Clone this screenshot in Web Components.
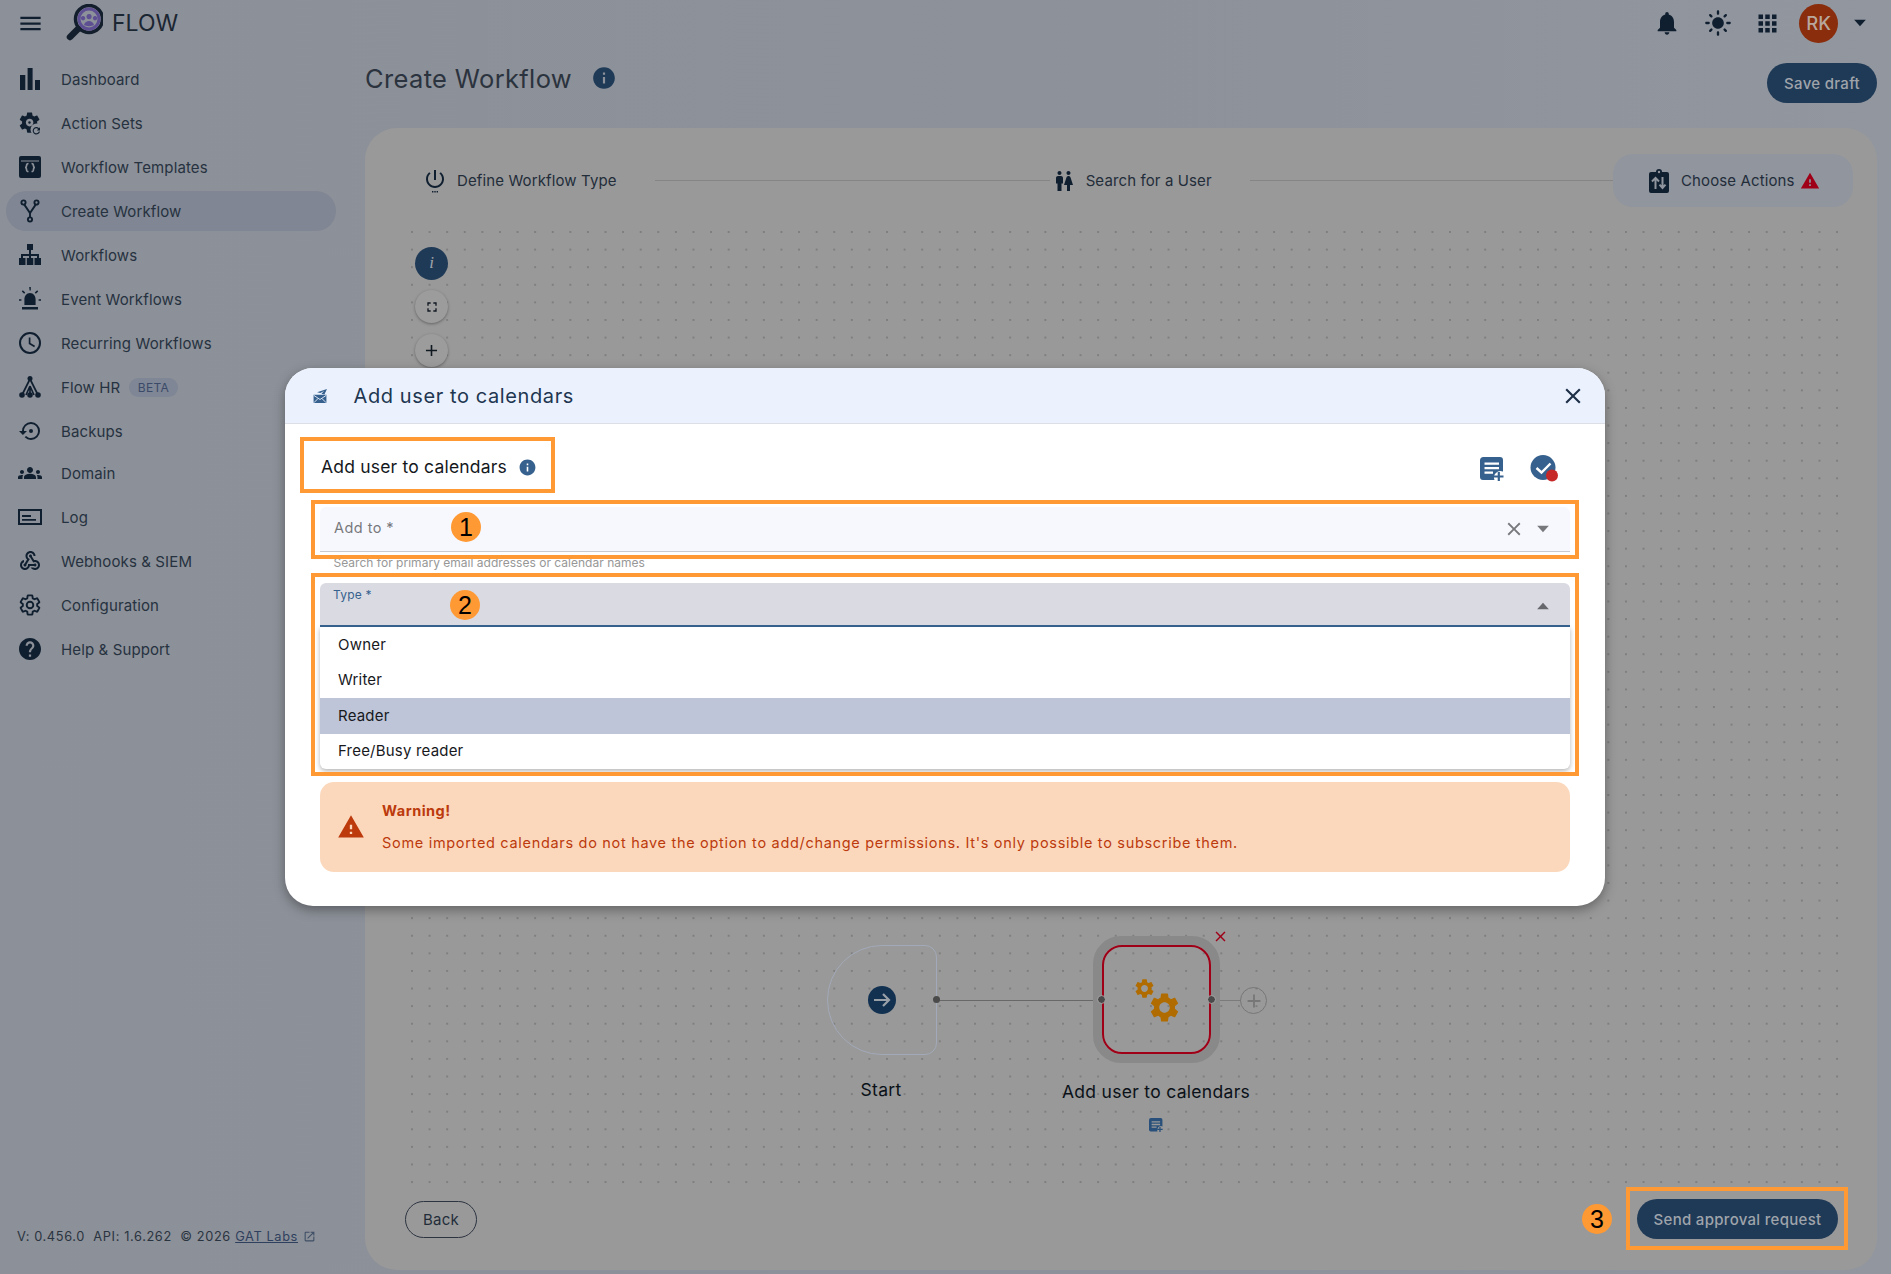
<!DOCTYPE html>
<html lang="en">
<head>
<meta charset="utf-8">
<title>Flow - Create Workflow</title>
<style>
  html, body { margin: 0; padding: 0; }
  body { width: 1891px; height: 1274px; overflow: hidden; background: #8d9199; font-family: Inter, "Noto Sans", sans-serif; }
</style>
</head>
<body>
<fw-app>
  <fw-topbar slot="top"></fw-topbar>

  <fw-sidenav slot="side">
    <fw-nav-item icon="bars">Dashboard</fw-nav-item>
    <fw-nav-item icon="gearsync">Action Sets</fw-nav-item>
    <fw-nav-item icon="template">Workflow Templates</fw-nav-item>
    <fw-nav-item icon="fork" active>Create Workflow</fw-nav-item>
    <fw-nav-item icon="sitemap">Workflows</fw-nav-item>
    <fw-nav-item icon="siren">Event Workflows</fw-nav-item>
    <fw-nav-item icon="clock">Recurring Workflows</fw-nav-item>
    <fw-nav-item icon="tree" chip="BETA">Flow HR</fw-nav-item>
    <fw-nav-item icon="restore">Backups</fw-nav-item>
    <fw-nav-item icon="groups" style="margin-top:-2px">Domain</fw-nav-item>
    <fw-nav-item icon="log">Log</fw-nav-item>
    <fw-nav-item icon="webhook">Webhooks &amp; SIEM</fw-nav-item>
    <fw-nav-item icon="cog">Configuration</fw-nav-item>
    <fw-nav-item icon="help">Help &amp; Support</fw-nav-item>
  </fw-sidenav>

  <fw-page slot="main" heading="Create Workflow">
    <fw-panel>
      <fw-stepper slot="steps"></fw-stepper>
      <fw-canvas slot="canvas"></fw-canvas>
      <fw-button slot="back" outline>Back</fw-button>
      <fw-button slot="next" style="width:201px">Send approval request</fw-button>
    </fw-panel>
  </fw-page>

  <fw-dialog slot="overlay" heading="Add user to calendars">
    <fw-field label="Add to *" hint="Search for primary email addresses or calendar names" clearable></fw-field>
    <fw-field label="Type *" open></fw-field>
    <fw-menu>
      <fw-option>Owner</fw-option>
      <fw-option>Writer</fw-option>
      <fw-option selected>Reader</fw-option>
      <fw-option>Free/Busy reader</fw-option>
    </fw-menu>
    <fw-alert title="Warning!">Some imported calendars do not have the option to add/change permissions. It's only possible to subscribe them.</fw-alert>
  </fw-dialog>

  <!-- annotations drawn over the screenshot -->
  <fw-mark slot="overlay" style="left:300px;top:437px;width:255px;height:56px"></fw-mark>
  <fw-mark slot="overlay" style="left:311px;top:500px;width:1268px;height:59px"></fw-mark>
  <fw-mark slot="overlay" style="left:311px;top:573px;width:1268px;height:203px"></fw-mark>
  <fw-mark slot="overlay" style="left:1626px;top:1187px;width:222px;height:63px"></fw-mark>
  <fw-num slot="overlay" style="left:451px;top:512px">1</fw-num>
  <fw-num slot="overlay" style="left:450px;top:590px">2</fw-num>
  <fw-num slot="overlay" style="left:1582px;top:1204px">3</fw-num>
</fw-app>

<script>
const GEAR = 'M19.14 12.94c.04-.3.06-.61.06-.94 0-.32-.02-.64-.07-.94l2.03-1.58c.18-.14.23-.41.12-.61l-1.92-3.32c-.12-.22-.37-.29-.59-.22l-2.39.96c-.5-.38-1.03-.7-1.62-.94l-.36-2.54c-.04-.24-.24-.41-.48-.41h-3.84c-.24 0-.43.17-.47.41l-.36 2.54c-.59.24-1.13.57-1.62.94l-2.39-.96c-.22-.08-.47 0-.59.22L2.74 8.87c-.12.21-.08.47.12.61l2.03 1.58c-.05.3-.09.63-.09.94s.02.64.07.94l-2.03 1.58c-.18.14-.23.41-.12.61l1.92 3.32c.12.22.37.29.59.22l2.39-.96c.5.38 1.03.7 1.62.94l.36 2.54c.05.24.24.41.48.41h3.84c.24 0 .44-.17.47-.41l.36-2.54c.59-.24 1.13-.56 1.62-.94l2.39.96c.22.08.47 0 .59-.22l1.92-3.32c.12-.22.07-.47-.12-.61l-2.01-1.58z';
const HOLE = 'M12 15.6c-1.98 0-3.6-1.62-3.6-3.6s1.62-3.6 3.6-3.6 3.6 1.62 3.6 3.6-1.62 3.6-3.6 3.6z';

const ICONS = {
  menu: '<path d="M3 18h18v-2H3v2zm0-5h18v-2H3v2zm0-7v2h18V6H3z"/>',
  bars: '<path d="M2 8h5.3v15H2zM9.6 1h5v22h-5zM17 13h5v10h-5z"/>',
  gearsync: `<path fill-rule="evenodd" d="${GEAR}${HOLE}" transform="translate(-1 -1) scale(1.05)"/><circle cx="11.500" cy="11.500" r="1.200"/><circle cx="18.5" cy="18.5" r="6" fill="var(--cut,#8d9199)"/><path d="M22 16.2v3.2h-3.2l1.3-1.3a2.5 2.5 0 1 0 .6 2.4h1.3a3.7 3.7 0 1 1-1-3.3z"/>`,
  template: '<path fill-rule="evenodd" d="M3 1h18a2 2 0 0 1 2 2v18a2 2 0 0 1-2 2H3a2 2 0 0 1-2-2V3a2 2 0 0 1 2-2zm0 4.5V21h18V5.500z"/><rect x="2.5" y="6.5" width="19" height="15"/><path d="M10.500 8.500c-2 0-2 1-2 2.500 0 1-.5 1.500-1.500 1.500 1 0 1.500.5 1.500 1.500 0 1.800 0 2.500 2 2.500M13.500 8.500c2 0 2 1 2 2.500 0 1 .5 1.500 1.500 1.500-1 0-1.500.5-1.500 1.500 0 1.800 0 2.500-2 2.500" fill="none" stroke="#8d9199" stroke-width="1.700"/>',
  fork: '<g fill="none" stroke="currentColor" stroke-width="1.9"><circle cx="5.5" cy="3.5" r="2.1"/><circle cx="18.5" cy="3.5" r="2.1"/><circle cx="12" cy="20.5" r="2.1"/><path d="M6.3 5.6l5.7 8.4 5.7-8.4M12 14v4.4"/></g>',
  sitemap: '<path d="M9 1h6v6H9zM11 7h2v4h8v4h-2v-2h-6v2h-2v-2H5v2H3v-4h8zM1 15h6.5v7H1zM8.8 15h6.5v7H8.8zM16.5 15H23v7h-6.5z"/>',
  siren: '<path d="M12 6c3.6 0 5.6 3 5.6 6.5V18H6.4v-5.5C6.4 9 8.4 6 12 6zM4 20h16v2.4H4zM11.2 0h1.6v3.6h-1.2zM1 12.2h2.4v1.6H1zM20.6 12.2H23v1.6h-2.4zM3.8 4.4l1-1.2 2.4 2.4-1 1.1zM20.2 4.4l-1-1.2-2.4 2.4 1 1.1z"/>',
  clock: '<circle cx="12" cy="12" r="10" fill="none" stroke="currentColor" stroke-width="2"/><path d="M11.6 6.5v6l5 3" fill="none" stroke="currentColor" stroke-width="1.7"/>',
  tree: '<circle cx="12" cy="3.5" r="2.5"/><circle cx="4" cy="20" r="2.8"/><circle cx="12" cy="20" r="2.8"/><circle cx="20" cy="20" r="2.8"/><path d="M12 4L4 20M12 4l8 16M12 11v9M12 11l-4 9M12 11l4 9" fill="none" stroke="currentColor" stroke-width="1.7"/>',
  restore: '<path d="M13 3a9 9 0 0 0-9 9H1l3.89 3.89.07.14L9 12H6c0-3.87 3.13-7 7-7s7 3.13 7 7-3.13 7-7 7c-1.93 0-3.68-.79-4.94-2.06l-1.42 1.42A8.954 8.954 0 0 0 13 21a9 9 0 0 0 0-18z"/><circle cx="13" cy="12" r="2"/>',
  groups: '<path d="M12 12.75c1.63 0 3.07.39 4.24.9 1.08.48 1.76 1.56 1.76 2.73V18H6v-1.61c0-1.18.68-2.26 1.76-2.73 1.17-.52 2.61-.91 4.24-.91zM4 13c1.1 0 2-.9 2-2s-.9-2-2-2-2 .9-2 2 .9 2 2 2zm1.13 1.1c-.37-.06-.74-.1-1.13-.1-.99 0-1.93.21-2.78.58C.48 14.9 0 15.62 0 16.43V18h4.5v-1.61c0-.83.23-1.61.63-2.29zM20 13c1.1 0 2-.9 2-2s-.9-2-2-2-2 .9-2 2 .9 2 2 2zm4 3.43c0-.81-.48-1.53-1.22-1.85-.85-.37-1.79-.58-2.78-.58-.39 0-.76.04-1.13.1.4.68.63 1.46.63 2.29V18H24v-1.57zM12 6c1.66 0 3 1.34 3 3s-1.34 3-3 3-3-1.34-3-3 1.34-3 3-3z"/>',
  log: '<path fill-rule="evenodd" d="M0 4h24v16H0zm2 2v12h20V6z"/><path d="M4 10h9v2H4zM4 14h14v1.8H4z"/>',
  webhook: '<path d="M10 15h5.88c.27-.31.67-.5 1.12-.5.83 0 1.5.67 1.5 1.5s-.67 1.5-1.5 1.5c-.44 0-.84-.19-1.12-.5H11.9c-.46 2.28-2.48 4-4.9 4-2.76 0-5-2.24-5-5 0-2.42 1.72-4.44 4-4.9v2.07c-1.16.41-2 1.53-2 2.83 0 1.65 1.35 3 3 3s3-1.35 3-3v-1zm2.5-11c1.65 0 3 1.35 3 3h2c0-2.76-2.24-5-5-5s-5 2.24-5 5c0 1.43.6 2.71 1.55 3.62l-2.35 3.9c-.68.14-1.2.75-1.2 1.48 0 .83.67 1.5 1.5 1.5s1.5-.67 1.5-1.5c0-.16-.02-.31-.07-.45l3.38-5.63C10.49 9.61 9.5 8.42 9.5 7c0-1.65 1.35-3 3-3zm4.5 9c-.64 0-1.23.2-1.72.54l-3.05-5.07C11.53 8.35 11 7.74 11 7c0-.83.67-1.5 1.5-1.5S14 6.17 14 7c0 .15-.02.29-.06.43l2.19 3.65c.28-.05.57-.08.87-.08 2.76 0 5 2.24 5 5s-2.24 5-5 5c-1.85 0-3.47-1.01-4.33-2.5h2.67c.48.32 1.05.5 1.66.5 1.65 0 3-1.35 3-3s-1.35-3-3-3z"/>',
  cog: `<path d="${GEAR}" fill="none" stroke="currentColor" stroke-width="1.9"/><circle cx="12" cy="12" r="3.3" fill="none" stroke="currentColor" stroke-width="1.9"/>`,
  gear: `<path fill-rule="evenodd" d="${GEAR}${HOLE}"/>`,
  help: '<path d="M12 2C6.48 2 2 6.48 2 12s4.48 10 10 10 10-4.48 10-10S17.52 2 12 2zm1 17h-2v-2h2v2zm2.07-7.75l-.9.92C13.45 12.9 13 13.5 13 15h-2v-.5c0-1.1.45-2.1 1.17-2.83l1.24-1.26c.37-.36.59-.86.59-1.41 0-1.1-.9-2-2-2s-2 .9-2 2H8c0-2.21 1.79-4 4-4s4 1.79 4 4c0 .88-.36 1.68-.93 2.25z" transform="translate(-1.200 -1.200) scale(1.100)"/>',
  bell: '<path d="M12 22c1.1 0 2-.9 2-2h-4c0 1.1.89 2 2 2zm6-6v-5c0-3.07-1.64-5.64-4.5-6.32V4c0-.83-.67-1.5-1.5-1.5s-1.5.67-1.5 1.5v.68C7.63 5.36 6 7.92 6 11v5l-2 2v1h16v-1l-2-2z"/>',
  sun: '<path d="M12 7c-2.76 0-5 2.24-5 5s2.24 5 5 5 5-2.24 5-5-2.24-5-5-5zM2 13h2c.55 0 1-.45 1-1s-.45-1-1-1H2c-.55 0-1 .45-1 1s.45 1 1 1zm18 0h2c.55 0 1-.45 1-1s-.45-1-1-1h-2c-.55 0-1 .45-1 1s.45 1 1 1zM11 2v2c0 .55.45 1 1 1s1-.45 1-1V2c0-.55-.45-1-1-1s-1 .45-1 1zm0 18v2c0 .55.45 1 1 1s1-.45 1-1v-2c0-.55-.45-1-1-1s-1 .45-1 1zM5.99 4.58a.996.996 0 0 0-1.41 0 .996.996 0 0 0 0 1.41l1.06 1.06c.39.39 1.03.39 1.41 0s.39-1.03 0-1.41L5.99 4.58zm12.37 12.37a.996.996 0 0 0-1.41 0 .996.996 0 0 0 0 1.41l1.06 1.06c.39.39 1.03.39 1.41 0a.996.996 0 0 0 0-1.41l-1.06-1.06zm1.06-10.96a.996.996 0 0 0 0-1.41.996.996 0 0 0-1.41 0l-1.06 1.06c-.39.39-.39 1.03 0 1.41s1.03.39 1.41 0l1.06-1.06zM7.05 18.36a.996.996 0 0 0 0-1.41.996.996 0 0 0-1.41 0l-1.06 1.06c-.39.39-.39 1.03 0 1.41s1.03.39 1.41 0l1.06-1.06z"/>',
  apps: '<path d="M4 8h4V4H4v4zm6 12h4v-4h-4v4zm-6 0h4v-4H4v4zm0-6h4v-4H4v4zm6 0h4v-4h-4v4zm6-10v4h4V4h-4zm-6 4h4V4h-4v4zm6 6h4v-4h-4v4zm0 6h4v-4h-4v4z"/>',
  info: '<path d="M12 2C6.48 2 2 6.48 2 12s4.48 10 10 10 10-4.48 10-10S17.52 2 12 2zm1 15h-2v-6h2v6zm0-8h-2V7h2v2z"/>',
  close: '<path d="M19 6.41 17.59 5 12 10.59 6.41 5 5 6.41 10.59 12 5 17.59 6.41 19 12 13.41 17.59 19 19 17.59 13.41 12z"/>',
  warning: '<path d="M1 21h22L12 2 1 21zm12-3h-2v-2h2v2zm0-4h-2v-4h2v4z"/>',
  power: '<path d="M13 1h-2v10h2V1zm4.83 2.17l-1.42 1.42C17.99 5.86 19 7.81 19 10c0 3.87-3.13 7-7 7s-7-3.13-7-7c0-2.19 1.01-4.14 2.58-5.42L6.17 3.17C4.23 4.82 3 7.26 3 10c0 4.97 4.03 9 9 9s9-4.03 9-9c0-2.74-1.23-5.18-3.17-6.83z"/><path d="M9 22h1.4v1.4H9zM11.3 22h1.4v1.4h-1.4zM13.6 22H15v1.4h-1.4z"/>',
  people: '<path d="M5.5 22v-7.5H4V9c0-1.1.9-2 2-2h3c1.1 0 2 .9 2 2v5.5H9.5V22h-4zM18 22v-6h3l-2.54-7.63C18.18 7.55 17.42 7 16.56 7h-.12c-.86 0-1.63.55-1.9 1.37L12 16h3v6h3zM7.5 6c1.11 0 2-.89 2-2s-.89-2-2-2-2 .89-2 2 .89 2 2 2zm9 0c1.11 0 2-.89 2-2s-.89-2-2-2-2 .89-2 2 .89 2 2 2z"/>',
  clipboard: '<path d="M4 3h5a3 3 0 0 1 6 0h5a2 2 0 0 1 2 2v17a2 2 0 0 1-2 2H4a2 2 0 0 1-2-2V5a2 2 0 0 1 2-2z"/><circle cx="12" cy="3" r="1.2" fill="#90959e"/><path d="M8.5 20V9.5M5 12.5l3.5-3.6 3.5 3.6M15.5 8v11M12.5 15.6l3 3.4 3-3.4" fill="none" stroke="#90959e" stroke-width="2"/>',
  postadd: '<path d="M3.5 0h16.500A3 3 0 0 1 23 3v11.500a6.500 6.500 0 0 0-8.500 8.500H3a3 3 0 0 1-3-3V3.500A3.500 3.500 0 0 1 3.500 0z"/><path d="M4.500 5.500h14.500v2.300H4.500zM4.500 10h14.500v2.300H4.500zM4.500 14.500h8.500v2.300H4.500z" fill="var(--cut,#fff)"/><path d="M18.800 15v9M14 19.500h9.500" fill="none" stroke="currentColor" stroke-width="2.200"/>',
  fullscreen: '<path d="M7 14H5v5h5v-2H7v-3zm-2-4h2V7h3V5H5v5zm12 7h-3v2h5v-5h-2v3zM14 5v2h3v3h2V5h-5z"/>',
  plus: '<path d="M19 13h-6v6h-2v-6H5v-2h6V5h2v6h6v2z"/>',
  external: '<path d="M19 19H5V5h7V3H5a2 2 0 0 0-2 2v14a2 2 0 0 0 2 2h14c1.1 0 2-.9 2-2v-7h-2v7zM14 3v2h3.590l-9.830 9.830 1.410 1.410L19 6.410V10h2V3h-7z"/>',
  mailsend: '<path d="M1 10h22v14H1z"/><path d="M1.500 11l10.500 7 10.500-7M1.500 23.500l7.500-7.500M22.500 23.500l-7.500-7.500" fill="none" stroke="#ebf2fe" stroke-width="1.500"/><path d="M24 0L7 5.500l5.500 1.500L19 3.500 14.500 8l5 1.500z"/>',
  caretdown: '<path d="M5 8h14l-7 8z"/>',
  caretup: '<path d="M5 16h14l-7-8z"/>'
};

class FwBase extends HTMLElement {
  constructor() {
    super();
    this.attachShadow({ mode: 'open' }).innerHTML = this.markup();
  }
  attr(name, fallback = '') {
    return this.hasAttribute(name) ? this.getAttribute(name) : fallback;
  }
  markup() { return '<slot></slot>'; }
}

class FwIcon extends FwBase {
  markup() {
    const size = this.attr('size', '24');
    return `<style>
        :host { display: inline-flex; flex: none; width: ${size}px; height: ${size}px; color: inherit; }
        svg { width: 100%; height: 100%; fill: currentColor; display: block; overflow: visible; }
      </style>
      <svg viewBox="0 0 24 24" aria-hidden="true">${ICONS[this.attr('name')] || ''}</svg>`;
  }
}

class FwApp extends FwBase {
  markup() {
    return `<style>
        :host { display: grid; position: relative; width: 1891px; height: 1274px; overflow: hidden;
          grid-template-columns: 365px 1fr; grid-template-rows: 46px 1fr;
          background: linear-gradient(90deg, #8c9098 0%, #8d9199 60%, #92979f 100%);
          color: #232d3a; font-family: Inter, "Noto Sans", sans-serif; }
        .top { grid-column: 1 / 3; }
        .side, .main { min-height: 0; min-width: 0; }
      </style>
      <div class="top"><slot name="top"></slot></div>
      <div class="side"><slot name="side"></slot></div>
      <div class="main"><slot name="main"></slot></div>
      <slot name="overlay"></slot>`;
  }
}

class FwTopbar extends FwBase {
  markup() {
    return `<style>
        :host { display: flex; align-items: center; height: 46px; color: #101f30; }
        .burger { margin-left: 17px; color: #101f30; }
        .logo { position: relative; width: 37px; height: 38px; margin-left: 22px; }
        .logo svg { width: 37px; height: 38px; display: block; }
        .name { font-size: 23px; margin-left: 9px; color: #1b2633; }
        .spacer { flex: 1; }
        fw-icon { color: #101f30; }
        .avatar { width: 39px; height: 39px; border-radius: 50%; background: #8a2d0c; color: #b8a79d;
          display: flex; align-items: center; justify-content: center; font-size: 18.500px; font-weight: 500; }
      </style>
      <fw-icon class="burger" name="menu" size="27"></fw-icon>
      <div class="logo">
        <svg viewBox="0 0 37 38"><circle cx="23" cy="15" r="13.500" fill="#8d9199" stroke="#141f2d" stroke-width="3.500"/>
          <circle cx="23" cy="15" r="10" fill="none" stroke="#5d4f92" stroke-width="3"/>
          <path d="M17 12a2.200 2.200 0 1 0 .1 0zM23 10a2.600 2.600 0 1 0 .1 0zM29 12a2.200 2.200 0 1 0 .1 0zM18 21c.8-3 3-4 5-4s4.200 1 5 4c-2.500 1.500-7.500 1.500-10 0z" fill="#5d4f92"/>
          <path d="M12 25L4 33" stroke="#141f2d" stroke-width="6.500" stroke-linecap="round"/></svg>
      </div>
      <div class="name">FLOW</div>
      <div class="spacer"></div>
      <fw-icon name="bell" size="28" style="margin-right:2px"></fw-icon>
      <fw-icon name="sun" size="28" style="margin-left:21px;margin-right:2px"></fw-icon>
      <fw-icon name="apps" size="27" style="margin-left:20px"></fw-icon>
      <div class="avatar" style="margin-left:18px">RK</div>
      <fw-icon name="caretdown" size="20" style="margin:0 21px 0 12px"></fw-icon>`;
  }
}

class FwSidenav extends FwBase {
  markup() {
    return `<style>
        :host { display: flex; flex-direction: column; height: 100%; box-sizing: border-box; padding-top: 13px; }
        nav { display: flex; flex-direction: column; gap: 4px; }
        footer { margin-top: auto; padding: 0 0 30px 17px; font-size: 12.800px; letter-spacing: .62px;
          color: #2a3440; white-space: pre; display: flex; align-items: center; }
        a { color: #2f405e; text-decoration: underline; margin-left: 0; }
        fw-icon { color: #3e4e66; margin-left: 5px; }
      </style>
      <nav><slot></slot></nav>
      <footer>V: 0.456.0  API: 1.6.262  © 2026 <a>GAT Labs</a><fw-icon name="external" size="13"></fw-icon></footer>`;
  }
}

class FwNavItem extends FwBase {
  markup() {
    const chip = this.attr('chip');
    return `<style>
        :host { display: flex; align-items: center; height: 40px; width: 330px; margin-left: 6px; box-sizing: border-box;
          padding-left: 12px; border-radius: 20px; font-size: 15px; letter-spacing: .12px; color: #263240; }
        :host([active]) { background: #808693; }
        fw-icon { color: #101f30; margin-right: 19px; --cut: #8d9199; }
        .chip { margin-left: 9px; height: 19px; padding: 0 8.500px; border-radius: 10px; background: #7f8695; color: #3a4a68;
          font-size: 12px; line-height: 19px; letter-spacing: .3px; }
      </style>
      <fw-icon name="${this.attr('icon')}" size="24"></fw-icon>
      <slot></slot>${chip ? `<span class="chip">${chip}</span>` : ''}`;
  }
}

class FwPage extends FwBase {
  markup() {
    return `<style>
        :host { display: flex; flex-direction: column; height: 100%; box-sizing: border-box; padding: 0 14px 4px 0; }
        header { display: flex; align-items: center; height: 82px; flex: none; }
        h1 { margin: 0 0 18px; font-size: 25.500px; font-weight: 400; letter-spacing: .35px; color: #2b333e; }
        fw-icon { color: #1f3a57; margin: 0 0 18px 19px; }
        .space { flex: 1; }
        header > fw-button { margin-top: -8px; }
      </style>
      <header>
        <h1>${this.attr('heading')}</h1>
        <fw-icon name="info" size="26"></fw-icon>
        <div class="space"></div>
        <fw-button>Save draft</fw-button>
      </header>
      <slot></slot>`;
  }
}

class FwButton extends FwBase {
  markup() {
    return `<style>
        :host { display: inline-flex; align-items: center; justify-content: center; box-sizing: border-box; height: 40px;
          padding: 0 17px; border-radius: 20px; background: #1f3a57; color: #9fa4ab; font-size: 15px; font-weight: 500;
          letter-spacing: .3px; white-space: nowrap; }
        :host([outline]) { background: transparent; border: 1.500px solid #2c3440; color: #232d3a; width: 72px; height: 37px; font-weight: 400; }
      </style><slot></slot>`;
  }
}

class FwPanel extends FwBase {
  markup() {
    return `<style>
        :host { display: flex; flex-direction: column; flex: 1; min-height: 0; background: #999; border-radius: 32px; }
        .canvas { flex: 1; min-height: 0; }
        .actions { display: flex; justify-content: space-between; align-items: center; flex: none;
          height: 85px; padding: 0 39px 17px 40px; box-sizing: border-box; }
      </style>
      <slot name="steps"></slot>
      <div class="canvas"><slot name="canvas"></slot></div>
      <div class="actions"><slot name="back"></slot><slot name="next"></slot></div>`;
  }
}

class FwStepper extends FwBase {
  markup() {
    return `<style>
        :host { display: flex; align-items: center; flex: none; height: 53px; margin: 26px 0 18px; padding: 0 24px 0 58px; color: #232d3a; }
        .step { display: flex; align-items: center; gap: 10px; font-size: 15px; letter-spacing: .12px; white-space: nowrap; }
        fw-icon { color: #101f30; }
        .line { height: 1px; background: #858585; flex: none; }
        .current { background: #90959e; height: 53px; width: 240px; box-sizing: border-box; padding-left: 34px; border-radius: 20px; flex: none; }
        .warn { color: #9f0017; margin-left: -5px; }
      </style>
      <div class="step"><fw-icon name="power" size="24"></fw-icon>Define Workflow Type</div>
      <div class="line" style="width:395px;margin:0 2px 0 38px"></div>
      <div class="step"><fw-icon name="people" size="24"></fw-icon>Search for a User</div>
      <div class="line" style="flex:1;margin-left:38px"></div>
      <div class="step current"><fw-icon name="clipboard" size="24"></fw-icon>Choose Actions<fw-icon class="warn" name="warning" size="20"></fw-icon></div>`;
  }
}

class FwCanvas extends FwBase {
  markup() {
    return `<style>
        :host { display: block; position: relative; height: 100%; margin: 0 26px 0 35px;
          background-image: radial-gradient(circle at center, #777 .6px, transparent 1px);
          background-size: 17.600px 17.600px; background-position: 3.200px -1.800px; }
        .tools { position: absolute; left: 15px; top: 21.500px; display: flex; flex-direction: column; gap: 10.500px; }
        .tool { width: 33px; height: 33px; border-radius: 50%; background: #9c9c9c; color: #101820; display: flex;
          align-items: center; justify-content: center; box-shadow: 0 1px 3px rgba(0,0,0,.35); }
        .tool.info { background: #1f3a57; color: #9fa4ab; font: italic 17px "Liberation Serif", serif; box-shadow: none; }
        .wire { position: absolute; height: 1.500px; background: #686868; }
        .handle { position: absolute; width: 7px; height: 7px; border-radius: 50%; background: #4a4a4a; }
        .add { position: absolute; width: 25px; height: 25px; border-radius: 50%; border: 1.500px solid #777; color: #777;
          display: flex; align-items: center; justify-content: center; }
        .start { position: absolute; box-sizing: border-box; width: 110px; height: 110px; border: 1px solid #a2a9b8; border-radius: 55px 12px 12px 55px;
          display: flex; align-items: center; justify-content: center; }
        .arrow { width: 28px; height: 28px; border-radius: 50%; background: #123151; }
        .arrow svg { display: block; }
        .halo { position: absolute; width: 127px; height: 127px; box-sizing: border-box; border-radius: 28px; border: 9px solid #898989; }
        .node { width: 100%; height: 100%; box-sizing: border-box; border: 2px solid #9f0017; border-radius: 20px; margin: 0; position: relative; }
        .gear { position: absolute; color: #b06c00; }
        .x { position: absolute; color: #9f0017; }
        .label { position: absolute; color: #0b1118; font-size: 17.500px; letter-spacing: .3px; transform: translateX(-50%); white-space: nowrap; }
        .doc { position: absolute; color: #29507a; --cut: #999; }
      </style>
      <div class="tools">
        <div class="tool info">i</div>
        <div class="tool"><fw-icon name="fullscreen" size="16"></fw-icon></div>
        <div class="tool"><fw-icon name="plus" size="19"></fw-icon></div>
      </div>
      <div class="wire" style="left:536px;top:774.500px;width:166px"></div>
      <div class="wire" style="left:811px;top:774.500px;width:30px;background:#7b7b7b"></div>
      <div class="start" style="left:427px;top:720px"><div class="arrow"><svg viewBox="0 0 28 28" width="28" height="28"><path d="M6 14h15M15 8l6 6-6 6" fill="none" stroke="#9aa0a8" stroke-width="2.200"/></svg></div></div>
      <div class="label" style="left:481px;top:854px">Start</div>
      <div class="halo" style="left:693px;top:711px"><div class="node"></div></div>
      <fw-icon class="gear" name="gear" size="23" style="left:733px;top:752px"></fw-icon>
      <fw-icon class="gear" name="gear" size="35" style="left:747px;top:765px"></fw-icon>
      <fw-icon class="x" name="close" size="17" style="left:811.500px;top:703px"></fw-icon>
      <div class="handle" style="left:533px;top:771px"></div>
      <div class="handle" style="left:698px;top:771px;outline:1.500px solid #9c9c9c"></div>
      <div class="handle" style="left:808px;top:771px;outline:1.500px solid #9c9c9c"></div>
      <div class="add" style="left:840px;top:762px"><fw-icon name="plus" size="22"></fw-icon></div>
      <div class="label" style="left:756px;top:856px">Add user to calendars</div>
      <fw-icon class="doc" name="postadd" size="14" style="left:749px;top:893px"></fw-icon>`;
  }
}

class FwDialog extends FwBase {
  markup() {
    return `<style>
        :host { display: flex; flex-direction: column; position: absolute; left: 285px; top: 368px; width: 1320px; height: 538px;
          background: #fff; border-radius: 28px; overflow: hidden; box-shadow: 0 4px 12px rgba(0,0,0,.35); }
        header { display: flex; align-items: center; height: 56px; flex: none; box-sizing: border-box; background: #ebf2fe;
          border-bottom: 1px solid #dcdfe6; color: #36618e; padding: 0 19px 0 28px; }
        h2 { margin: 0 0 0 26.500px; font-size: 20px; font-weight: 400; letter-spacing: .6px; flex: 1; color: #213650; }
        .head { display: flex; align-items: center; height: 83px; box-sizing: border-box; padding: 2px 0 0 36px; flex: none; color: #36618e; }
        .head h3 { margin: 0; font-size: 17.500px; font-weight: 400; letter-spacing: .2px; color: #14181d; }
        .body { padding: 0 35px; }
        .dot { position: relative; width: 28px; height: 28px; margin: 4px 47px 0 26px; }
        .dot svg { display: block; width: 28px; height: 28px; }
      </style>
      <header>
        <fw-icon name="mailsend" size="14"></fw-icon>
        <h2>${this.attr('heading')}</h2>
        <fw-icon name="close" size="26" style="color:#1e3048"></fw-icon>
      </header>
      <div class="head">
        <h3>${this.attr('heading')}</h3>
        <fw-icon name="info" size="19" style="margin:2px 0 0 11px;color:#36618e"></fw-icon>
        <div style="flex:1"></div>
        <fw-icon name="postadd" size="24" style="margin-top:4px"></fw-icon>
        <div class="dot">
          <svg viewBox="0 0 28 28"><circle cx="13" cy="12.500" r="12.500" fill="#36618e"/><path d="M6.500 13l5 4.500 9-9" fill="none" stroke="#fff" stroke-width="2.400"/><circle cx="22" cy="20.500" r="6" fill="#c62828"/></svg>
        </div>
      </div>
      <div class="body"><slot></slot></div>`;
  }
}

class FwField extends FwBase {
  markup() {
    const open = this.hasAttribute('open');
    const hint = this.attr('hint');
    return `<style>
        :host { display: block; font-size: 14.500px; letter-spacing: .45px; }
        .box { position: relative; display: flex; align-items: center; box-sizing: border-box; height: 45px; padding: 0 17px 0 14px;
          background: #f7f8fe; border-bottom: 1px solid #c9cad0; border-radius: 6px 6px 0 0; color: #77787c; }
        .box:not(.open) .label { padding-bottom: 4px; }
        .open { background: #dadbe2; border-bottom: 2px solid #36618e; height: 44px; color: #36618e; align-items: flex-start; padding-top: 4px; font-size: 12px; letter-spacing: .2px; padding-left: 13px; }
        .label { flex: 1; }
        fw-icon { color: #77787c; }
        .open fw-icon { color: #66676c; margin-top: 9px; }
        .hint { height: 31px; box-sizing: border-box; padding: 2px 0 0 13.500px; font-size: 12px; letter-spacing: .02px; line-height: 17px; color: #979797; }
      </style>
      <div class="box ${open ? 'open' : ''}">
        <div class="label">${this.attr('label')}</div>
        ${this.hasAttribute('clearable') ? '<fw-icon name="close" size="22" style="margin-right:8px"></fw-icon>' : ''}
        <fw-icon name="${open ? 'caretup' : 'caretdown'}" size="20"></fw-icon>
      </div>
      ${hint ? `<div class="hint">${hint}</div>` : ''}`;
  }
}

class FwMenu extends FwBase {
  markup() {
    return `<style>
        :host { display: block; background: #fff; border-radius: 0 0 6px 6px; box-shadow: 0 2px 5px rgba(0,0,0,.3); overflow: hidden; }
      </style><slot></slot>`;
  }
}

class FwOption extends FwBase {
  markup() {
    return `<style>
        :host { display: flex; align-items: center; box-sizing: border-box; height: 35.500px; padding: 0 0 1px 18px; font-size: 15px; letter-spacing: .2px; color: #17191d; }
        :host([selected]) { background: #bec5d8; }
      </style><slot></slot>`;
  }
}

class FwAlert extends FwBase {
  markup() {
    return `<style>
        :host { display: flex; align-items: center; box-sizing: border-box; height: 90px; margin-top: 12.500px; padding-left: 17px;
          background: #fbd8bc; border-radius: 14px; color: #bc3a0c; }
        fw-icon { color: #bc3a0c; margin-right: 17px; }
        b { display: block; font-size: 14.500px; font-weight: 700; letter-spacing: .5px; margin-bottom: 15px; }
        div { font-size: 14.500px; letter-spacing: .69px; }
      </style>
      <fw-icon name="warning" size="28"></fw-icon>
      <div><b>${this.attr('title')}</b><slot></slot></div>`;
  }
}

class FwMark extends FwBase {
  markup() {
    return `<style>
        :host { display: block; position: absolute; box-sizing: border-box; border: 4px solid #ff9933; }
      </style>`;
  }
}

class FwNum extends FwBase {
  markup() {
    return `<style>
        :host { display: flex; position: absolute; width: 30px; height: 30px; border-radius: 50%; background: #ff9933;
          align-items: center; justify-content: center; color: #000; font: 25px "Liberation Sans", Arial, sans-serif; }
      </style><slot></slot>`;
  }
}

// children first so nested elements are upgraded with everything they need
customElements.define('fw-icon', FwIcon);
customElements.define('fw-button', FwButton);
customElements.define('fw-topbar', FwTopbar);
customElements.define('fw-nav-item', FwNavItem);
customElements.define('fw-sidenav', FwSidenav);
customElements.define('fw-stepper', FwStepper);
customElements.define('fw-canvas', FwCanvas);
customElements.define('fw-panel', FwPanel);
customElements.define('fw-page', FwPage);
customElements.define('fw-field', FwField);
customElements.define('fw-option', FwOption);
customElements.define('fw-menu', FwMenu);
customElements.define('fw-alert', FwAlert);
customElements.define('fw-dialog', FwDialog);
customElements.define('fw-mark', FwMark);
customElements.define('fw-num', FwNum);
customElements.define('fw-app', FwApp);
</script>
</body>
</html>
